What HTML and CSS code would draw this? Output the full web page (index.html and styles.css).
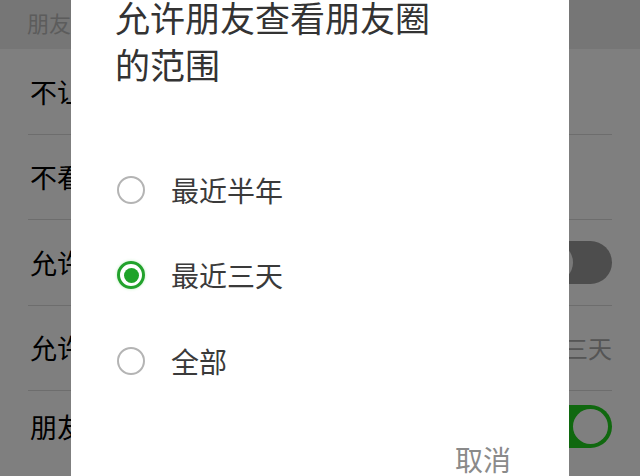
FILE: index.html
```html
<!DOCTYPE html>
<html lang="zh-CN">
<head>
<meta charset="utf-8">
<title>朋友圈权限</title>
<link rel="stylesheet" href="styles.css">
</head>
<body>
<div class="screen">
  <div class="page">
    <div class="header">朋友圈</div>
    <div class="list">
      <div class="row"><span class="row-text">不让他看</span></div>
      <div class="row"><span class="row-text">不看他</span></div>
      <div class="row"><span class="row-text">允许陌生人</span><span class="toggle"><span class="knob"></span></span></div>
      <div class="row"><span class="row-text">允许朋友</span><span class="row-value">最近三天</span></div>
      <div class="row last"><span class="row-text">朋友圈提醒</span><span class="toggle on"><span class="knob"></span></span></div>
    </div>
  </div>
  <div class="mask"></div>
  <div class="dialog">
    <div class="title">允许朋友查看朋友圈<br>的范围</div>
    <div class="options">
      <div class="option"><span class="radio"></span><span class="label">最近半年</span></div>
      <div class="option"><span class="radio checked"></span><span class="label">最近三天</span></div>
      <div class="option"><span class="radio"></span><span class="label">全部</span></div>
    </div>
    <div class="actions"><span class="cancel">取消</span></div>
  </div>
</div>
</body>
</html>
```
FILE: styles.css
```css
* { box-sizing: border-box; }
html, body {
  margin: 0;
  padding: 0;
  width: 640px;
  height: 476px;
  overflow: hidden;
  font-family: "Noto Sans CJK SC", "Noto Sans", sans-serif;
}
.screen {
  position: relative;
  width: 640px;
  height: 476px;
  overflow: hidden;
  background: #fff;
}
.page {
  display: flex;
  flex-direction: column;
}
.header {
  height: 49px;
  background: #ececec;
  color: #b8b8b8;
  font-size: 22px;
  line-height: 45px;
  padding-left: 27px;
}
.list {
  display: flex;
  flex-direction: column;
  padding: 0 28px;
}
.row {
  height: 85.5px;
  border-bottom: 1px solid #dadada;
  display: flex;
  align-items: center;
  justify-content: space-between;
  padding-left: 2px;
  font-size: 27px;
  color: #000;
}
.row.last {
  border-bottom: none;
  height: 70px;
}
.row-value {
  color: #aaa;
  font-size: 24px;
}
.toggle {
  position: relative;
  width: 80px;
  height: 43px;
  border-radius: 22px;
  background: #9a9a9a;
  flex-shrink: 0;
}
.toggle .knob {
  position: absolute;
  top: 2px;
  left: 2px;
  width: 39px;
  height: 39px;
  border-radius: 50%;
  background: #f2f2f2;
}
.toggle.on { background: #20d01e; }
.toggle.on .knob {
  left: auto;
  right: 4px;
  top: 4px;
  width: 35px;
  height: 35px;
  background: #fff;
}
.mask {
  position: absolute;
  inset: 0;
  background: rgba(0, 0, 0, 0.5);
}
.dialog {
  position: absolute;
  left: 71px;
  top: -31px;
  width: 498px;
  height: 540px;
  background: #fff;
  padding: 24px 58px 0 44px;
  display: flex;
  flex-direction: column;
}
.title {
  font-size: 35px;
  line-height: 47px;
  color: #333;
}
.options {
  margin-top: 60px;
  display: flex;
  flex-direction: column;
}
.option {
  height: 85.5px;
  display: flex;
  align-items: center;
  gap: 26px;
  padding-left: 2px;
}
.radio {
  width: 28px;
  height: 28px;
  border-radius: 50%;
  border: 2.5px solid #b4b4b4;
  flex-shrink: 0;
  display: flex;
  align-items: center;
  justify-content: center;
}
.radio.checked {
  border: 3px solid #22a22c;
  box-shadow: 0 0 3px rgba(60, 200, 60, 0.35);
}
.radio.checked::after {
  content: "";
  width: 15px;
  height: 15px;
  border-radius: 50%;
  background: #1fa329;
}
.label {
  font-size: 28px;
  color: #3a3a3a;
  line-height: 40px;
}
.actions {
  margin-top: 35px;
  display: flex;
  justify-content: flex-end;
}
.cancel {
  font-size: 28px;
  line-height: 40px;
  color: #8a8a8a;
}
```
